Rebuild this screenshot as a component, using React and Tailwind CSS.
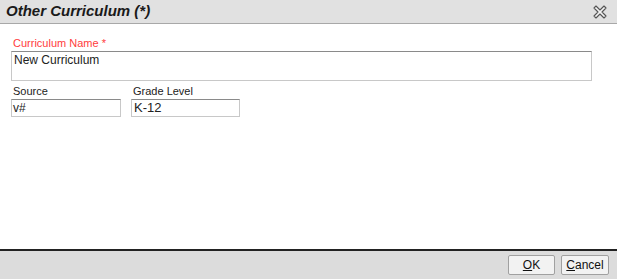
import React from 'react';

const CloseIcon = () => (
    <svg width="16" height="16" viewBox="0 0 16 16" fill="none">
        <path
            d="M2 4 L4 2 L8 6 L12 2 L14 4 L10 8 L14 12 L12 14 L8 10 L4 14 L2 12 L6 8 Z"
            stroke="#555"
            strokeWidth="1.1"
            strokeLinejoin="round"
            fill="#f4f4f4"
        />
    </svg>
);

const App = () => {
    return (
        <div className="w-[617px] h-[279px] flex flex-col bg-white font-['Liberation_Sans',Arial,sans-serif] overflow-hidden">
            {/* Title bar */}
            <div className="h-[24px] flex items-center justify-between pl-[6px] pr-[9px] bg-[#e1e1e1] border-b border-[#a8a8a8]">
                <span className="text-[15px] font-bold italic text-[#1a1a1a]">Other Curriculum (*)</span>
                <CloseIcon />
            </div>

            {/* Body */}
            <div className="flex-1 pt-[13px] pl-[11px] pr-[25px]">
                <div className="text-[11px] leading-[13px] text-[#ff3c3c] pl-[2px]">Curriculum Name *</div>
                <div className="mt-[1px] h-[30px] border border-[#c8c8c8] border-t-[#8a8a8a] px-[2px] text-[12px] leading-[16px] text-[#222]">
                    New Curriculum
                </div>
                <div className="flex gap-[10px] mt-[4px]">
                    <div className="flex flex-col">
                        <span className="text-[11px] leading-[13px] text-[#222] pl-[2px]">Source</span>
                        <div className="mt-[1px] w-[110px] h-[18px] border border-[#c8c8c8] border-t-[#8a8a8a] px-[1px] text-[12px] leading-[16px] text-[#222]">
                            v#
                        </div>
                    </div>
                    <div className="flex flex-col">
                        <span className="text-[11px] leading-[13px] text-[#222] pl-[2px]">Grade Level</span>
                        <div className="mt-[1px] w-[109px] h-[18px] border border-[#c8c8c8] border-t-[#8a8a8a] px-[2px] text-[13px] leading-[16px] text-[#222]">
                            K-12
                        </div>
                    </div>
                </div>
            </div>

            {/* Footer */}
            <div className="h-[30px] flex items-center justify-end gap-[6px] pr-[8px] bg-[#dcdcdc] border-t-2 border-[#222]">
                <button className="w-[47px] h-[20px] bg-[#f2f2f2] border border-[#a0a0a0] rounded-[2px] text-[12px] text-[#111]">
                    <span className="underline">O</span>K
                </button>
                <button className="w-[48px] h-[20px] bg-[#f2f2f2] border border-[#a0a0a0] rounded-[2px] text-[12px] text-[#111]">
                    <span className="underline">C</span>ancel
                </button>
            </div>
        </div>
    );
};

export default App;
